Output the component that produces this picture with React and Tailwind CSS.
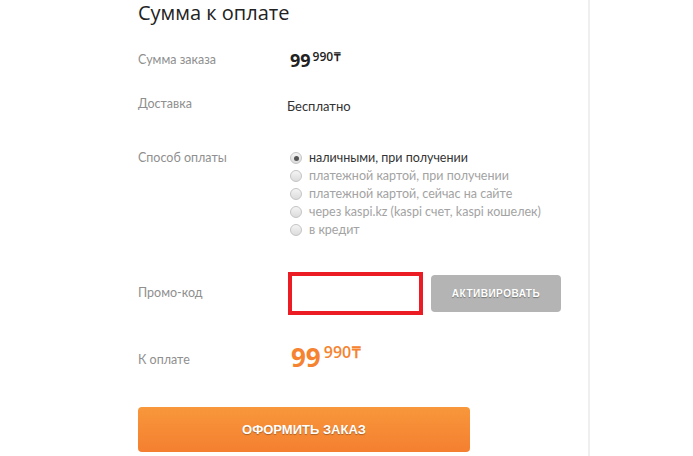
const OPTIONS = [
  { label: "наличными, при получении", checked: true },
  { label: "платежной картой, при получении" },
  { label: "платежной картой, сейчас на сайте" },
  { label: "через kaspi.kz (kaspi счет, kaspi кошелек)" },
  { label: "в кредит" },
];

function Radio({ checked }) {
  return (
    <span className="flex h-[12px] w-[12px] shrink-0 items-center justify-center rounded-full border border-[#c4c4c4] bg-gradient-to-b from-[#f4f4f4] to-[#dcdcdc]">
      {checked && <span className="h-[5px] w-[5px] rounded-full bg-[#555]" />}
    </span>
  );
}

function Price({ big, color }) {
  return (
    <span className={`flex items-start font-['Open_Sans',sans-serif] font-bold ${color}`}>
      <span className={big ? "text-[26px] leading-[30px]" : "text-[18px] leading-[22px]"}>99</span>
      <span className={big ? "ml-[3px] mt-[1px] text-[16px] leading-[18px] font-semibold" : "ml-[2px] mt-[1px] text-[12px] leading-[14px] font-semibold"}>
        990
      </span>
      <span className={big ? "ml-[1px] mt-[1px] text-[16px] leading-[18px] font-semibold" : "ml-[1px] mt-[1px] text-[12px] leading-[14px] font-semibold"}>
        ₸
      </span>
    </span>
  );
}

export default function App() {
  return (
    <div className="h-[456px] w-[693px] overflow-hidden bg-white font-['Lato','Open_Sans',sans-serif]">
      <div className="h-full w-[590px] border-r-2 border-[#efefef] pl-[138px]">
        <h2 className="font-['Open_Sans',sans-serif] text-[20px] leading-[26px] text-[#222]">Сумма к оплате</h2>

        <div className="mt-[22px] flex h-[24px] items-center">
          <div className="w-[152px] text-[12.5px] text-[#8f8f8f]">Сумма заказа</div>
          <Price color="text-[#222]" />
        </div>

        <div className="mt-[20px] flex h-[24px] items-center">
          <div className="w-[149px] text-[12.5px] text-[#8f8f8f]">Доставка</div>
          <div className="pt-[6px] text-[13px] text-[#333]">Бесплатно</div>
        </div>

        <div className="mt-[33px] flex">
          <div className="w-[152px] text-[12.5px] leading-[18px] text-[#8f8f8f]">Способ оплаты</div>
          <div className="flex flex-col">
            {OPTIONS.map((o) => (
              <label key={o.label} className="flex h-[18px] items-center gap-[7px]">
                <Radio checked={o.checked} />
                <span className={`text-[12.5px] leading-[18px] ${o.checked ? "text-[#333]" : "text-[#a3a3a3]"}`}>
                  {o.label}
                </span>
              </label>
            ))}
          </div>
        </div>

        <div className="mt-[33px] flex h-[43px] items-center">
          <div className="w-[150px] text-[12.5px] text-[#8f8f8f]">Промо-код</div>
          <input className="h-[43px] w-[135px] border-[4px] border-[#ec1c24] px-2 text-[13px] outline-none" />
          <button className="ml-[8px] h-[37px] w-[130px] rounded-[4px] bg-[#b4b4b4] font-['Liberation_Sans',sans-serif] text-[10px] font-bold tracking-[0.5px] text-white [text-shadow:0_1px_1px_rgba(0,0,0,0.35)]">
            АКТИВИРОВАТЬ
          </button>
        </div>

        <div className="mt-[27px] flex h-[30px] items-center">
          <div className="w-[153px] pt-[6px] text-[12.5px] text-[#8f8f8f]">К оплате</div>
          <Price big color="text-[#f5832f]" />
        </div>

        <button className="mt-[35px] h-[45px] w-[332px] rounded-[4px] bg-gradient-to-b from-[#f8973b] to-[#f47f30] font-['Liberation_Sans',sans-serif] text-[13px] font-bold text-white [text-shadow:0_1px_1px_rgba(0,0,0,0.3)]">
          ОФОРМИТЬ ЗАКАЗ
        </button>
      </div>
    </div>
  );
}
